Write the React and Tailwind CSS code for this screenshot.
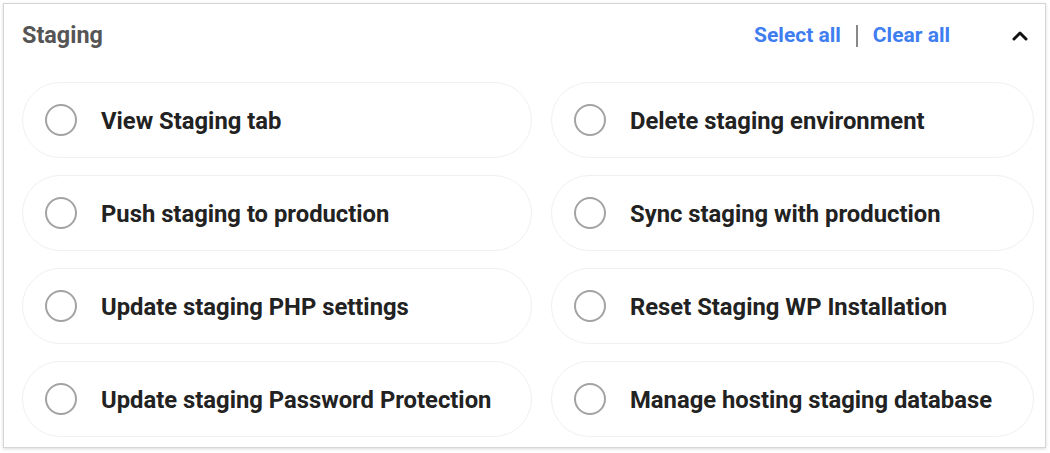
import React from "react";

const items = [
  ["View Staging tab", "Delete staging environment"],
  ["Push staging to production", "Sync staging with production"],
  ["Update staging PHP settings", "Reset Staging WP Installation"],
  ["Update staging Password Protection", "Manage hosting staging database"],
];

function Item({ label, wide }) {
  return (
    <div
      className={`flex h-[76px] items-center rounded-full border border-[#f0f0f0] pl-[22px] ${
        wide ? "w-[510px]" : "w-[483px]"
      }`}
    >
      <span className="h-[32px] w-[32px] shrink-0 rounded-full border-2 border-[#a3a3a3]" />
      <span className="ml-[24px] mt-[3px] text-[23.8px] font-bold text-[#222]">{label}</span>
    </div>
  );
}

export default function App() {
  return (
    <div
      className="h-[453px] w-[1050px] bg-white p-[3px]"
      style={{ fontFamily: "Roboto, 'Liberation Sans', sans-serif" }}
    >
      <div className="h-[445px] w-[1043px] border border-[#d6d6d6] bg-white pl-[18px] pr-[11px] shadow-[0_1px_3px_rgba(0,0,0,0.15)]">
        <div className="flex h-[64px] items-center">
          <span className="text-[23.4px] font-bold text-[#555]">Staging</span>
          <div className="ml-auto flex items-center">
            <span className="text-[21px] font-bold text-[#3f7ef0]">Select all</span>
            <span className="mx-[15px] h-[22px] w-[2px] bg-[#888]" />
            <span className="text-[21px] font-bold text-[#3f7ef0]">Clear all</span>
            <svg
              className="ml-[62px] mr-[6px]"
              width="16"
              height="10"
              viewBox="0 0 16 10"
              fill="none"
              stroke="#111"
              strokeWidth="3"
              strokeLinecap="round"
              strokeLinejoin="round"
            >
              <path d="M2 8l6-6 6 6" />
            </svg>
          </div>
        </div>
        <div className="mt-[14px] flex flex-col gap-[17px]">
          {items.map(([a, b]) => (
            <div key={a} className="flex gap-[19px]">
              <Item label={a} wide />
              <Item label={b} />
            </div>
          ))}
        </div>
      </div>
    </div>
  );
}
